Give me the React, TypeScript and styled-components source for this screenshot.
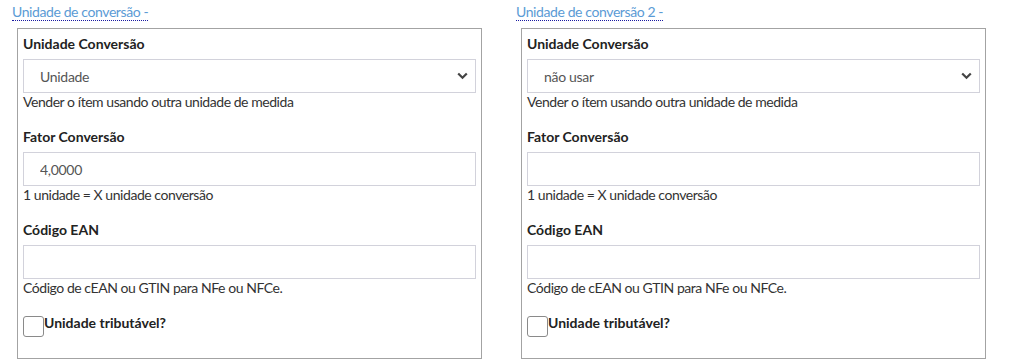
import React from "react";
import styled, { createGlobalStyle } from "styled-components";

const Global = createGlobalStyle`
  html, body { margin: 0; padding: 0; background: #fff; }
  body { font-family: "Lato", "Liberation Sans", sans-serif; font-size: 14px; color: #333; }
  * { box-sizing: border-box; }
`;

const Page = styled.div`
  display: flex;
  width: 1020px;
`;

const Column = styled.div`
  width: 504px;
  padding-top: 3px;
`;

const Legend = styled.span`
  display: inline-block;
  margin-left: 12px;
  font-size: 14px;
  line-height: 17px;
  letter-spacing: -0.4px;
  color: #5b9bd5;
  border-bottom: 1px dotted #1a1aa0;
`;

const Box = styled.div`
  margin-left: 17px;
  margin-top: 7px;
  width: 465px;
  border: 1px solid #a3a3a3;
  padding: 5px 5px 21px 5px;
`;

const Group = styled.div`
  margin-bottom: 16px;
`;

const Label = styled.div`
  font-weight: 700;
  line-height: 20px;
  margin-bottom: 5px;
  color: #222;
`;

const SelectWrap = styled.div`
  position: relative;
  height: 34px;
`;

const Select = styled.select`
  appearance: none;
  width: 100%;
  height: 34px;
  border: 1px solid #d2d2db;
  background: #fff;
  padding: 0 30px 0 16px;
  font-family: inherit;
  font-size: 14px;
  letter-spacing: -0.3px;
  color: #555;
  outline: none;
`;

const Chevron = styled.svg`
  position: absolute;
  right: 8px;
  top: 13px;
  pointer-events: none;
`;

const Input = styled.input`
  display: block;
  width: 100%;
  height: 34px;
  border: 1px solid #d2d2db;
  padding: 0 16px;
  font-family: inherit;
  font-size: 14px;
  letter-spacing: -0.3px;
  color: #555;
  outline: none;
`;

const Help = styled.div`
  line-height: 18px;
  letter-spacing: -0.45px;
  color: #333;
`;

const CheckRow = styled.label`
  display: flex;
  align-items: flex-start;
`;

const Check = styled.span`
  width: 21px;
  height: 21px;
  margin-top: 3px;
  border: 1px solid #8a8a8a;
  border-radius: 3px;
  background: #fff;
  flex: none;
`;

const CheckText = styled.span`
  font-weight: 700;
  line-height: 20px;
  color: #222;
`;

type Props = { title: string; unit: string; factor: string };

const Panel: React.FC<Props> = ({ title, unit, factor }) => (
  <Column>
    <Legend>{title}</Legend>
    <Box>
      <Group>
        <Label>Unidade Conversão</Label>
        <SelectWrap>
          <Select defaultValue={unit}>
            <option value={unit}>{unit}</option>
          </Select>
          <Chevron width="11" height="8" viewBox="0 0 11 8">
            <path d="M1.2 1.5 L5.5 5.8 L9.8 1.5" fill="none" stroke="#444" strokeWidth="2.2" />
          </Chevron>
        </SelectWrap>
        <Help>Vender o ítem usando outra unidade de medida</Help>
      </Group>
      <Group>
        <Label>Fator Conversão</Label>
        <Input defaultValue={factor} />
        <Help>1 unidade = X unidade conversão</Help>
      </Group>
      <Group>
        <Label>Código EAN</Label>
        <Input defaultValue="" />
        <Help>Código de cEAN ou GTIN para NFe ou NFCe.</Help>
      </Group>
      <CheckRow>
        <Check />
        <CheckText>Unidade tributável?</CheckText>
      </CheckRow>
    </Box>
  </Column>
);

export default function App() {
  return (
    <>
      <Global />
      <Page>
        <Panel title="Unidade de conversão -" unit="Unidade" factor="4,0000" />
        <Panel title="Unidade de conversão 2 -" unit="não usar" factor="" />
      </Page>
    </>
  );
}
